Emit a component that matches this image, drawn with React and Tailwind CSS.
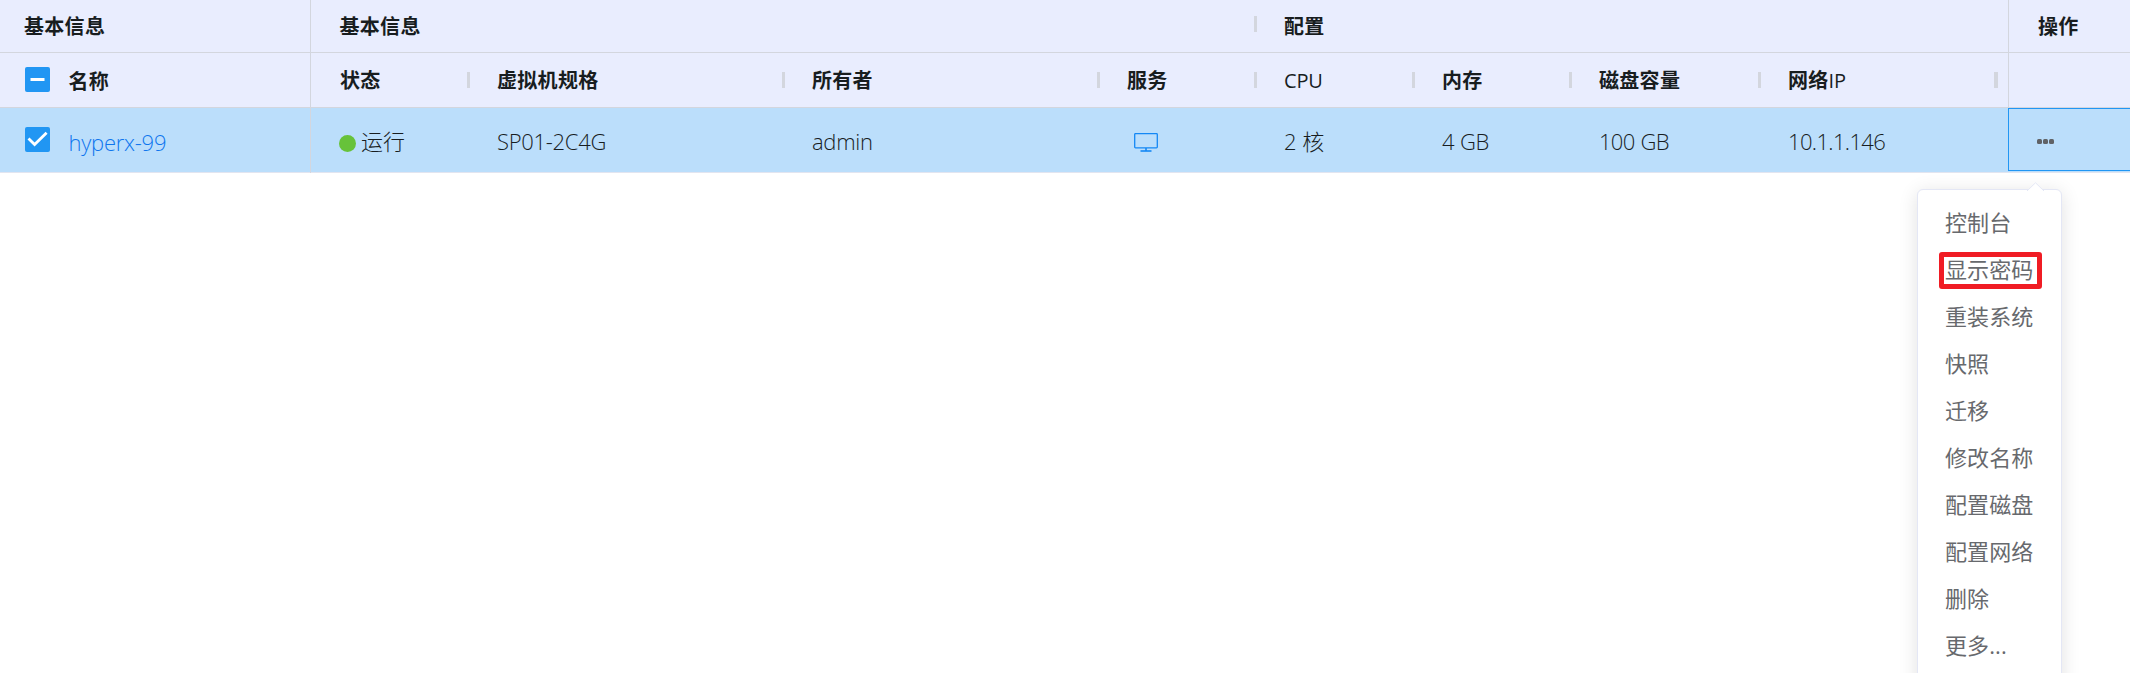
const Sep = ({ wide }) => (
  <span className={wide ? "absolute right-[10px] top-[19px] h-4 w-1 bg-[#d3d6de]" : "absolute -right-[2px] top-[19px] h-4 w-[3px] bg-[#d3d6de]"} />
);

const columns = [
  { title: "状态", width: "w-[157px]" },
  { title: "虚拟机规格", width: "w-[315px]" },
  { title: "所有者", width: "w-[315px]" },
  { title: "服务", width: "w-[157px]" },
  { title: "CPU", width: "w-[158px]", latin: true },
  { title: "内存", width: "w-[157px]" },
  { title: "磁盘容量", width: "w-[189px]" },
  { title: "网络", suffix: "IP", width: "w-[249px]", last: true },
];

const actions = ["控制台", "显示密码", "重装系统", "快照", "迁移", "修改名称", "配置磁盘", "配置网络", "删除", "更多..."];

const Monitor = () => (
  <svg className="ml-[7px] mt-[25px] h-5 w-6" viewBox="0 0 24 20" fill="none" stroke="#1488f5">
    <rect x="0.7" y="0.6" width="22.6" height="14.2" rx="0.8" strokeWidth="1.3" />
    <path d="M12 15v3" strokeWidth="1.6" />
    <path d="M6.5 18h11" strokeWidth="1.6" />
  </svg>
);

const Checkbox = ({ checked }) => (
  <svg className="h-[25px] w-[25px] shrink-0" viewBox="0 0 25 25" fill="none">
    <rect width="25" height="25" rx="2" fill="#2196f3" />
    {checked ? (
      <path d="M3.5 11.5L9.6 17.6L21.6 5.8" stroke="#fff" strokeWidth="2.8" />
    ) : (
      <path d="M5.5 12.5h14" stroke="#fff" strokeWidth="3" />
    )}
  </svg>
);

const Cell = ({ width, children }) => <div className={`${width} shrink-0 pl-[29px]`}>{children}</div>;

export default function App() {
  return (
    <div className="relative h-[673px] w-[2130px] overflow-hidden bg-white font-['Open_Sans','Noto_Sans_CJK_SC',sans-serif] whitespace-nowrap text-[#181d1f]">
      <div className="flex h-[173px]">
        <div className="w-[311px] shrink-0 border-r border-[#d3d6de]">
          <div className="h-[53px] border-b border-[#d3d6de] bg-[#e9edfe] pl-6 text-[20px] leading-[54px] font-bold tracking-[0.3px]">基本信息</div>
          <div className="flex h-[55px] border-b border-[#d3d6de] bg-[#e9edfe] pt-[14px] pl-[24.5px]">
            <Checkbox />
            <span className="ml-[19px] text-[20px] leading-[29px] font-bold tracking-[0.3px]">名称</span>
          </div>
          <div className="flex h-[65px] border-b border-[#e2e5f0] bg-[#bbdefb] pt-[19px] pl-[24.5px]">
            <Checkbox checked />
            <span className="ml-[19px] text-[22px] leading-[30px] font-light tracking-[-0.25px] text-[#0f76ee]">hyperx-99</span>
          </div>
        </div>

        <div className="w-[1697px] shrink-0">
          <div className="flex h-[53px] border-b border-[#d3d6de] bg-[#e9edfe] text-[20px] leading-[54px] font-bold tracking-[0.3px]">
            <div className="relative w-[944px] pl-[28.5px]">
              基本信息
              <span className="absolute -right-[2px] top-4 h-4 w-[3px] bg-[#d3d6de]" />
            </div>
            <div className="pl-[29px]">配置</div>
          </div>
          <div className="flex h-[55px] border-b border-[#d3d6de] bg-[#e9edfe] text-[20px] leading-[56px] font-bold tracking-[0.3px]">
            {columns.map((c) => (
              <div key={c.title} className={`${c.width} relative shrink-0 pl-[29px]`}>
                <span className={c.latin ? "font-medium tracking-[-0.2px]" : "font-bold"}>{c.title}</span>
                {c.suffix && <span className="font-medium tracking-[-0.2px]">{c.suffix}</span>}
                <Sep wide={c.last} />
              </div>
            ))}
          </div>
          <div className="flex h-[65px] border-b border-[#e2e5f0] bg-[#bbdefb] text-[22px] leading-[66px] font-light">
            <Cell width="w-[157px]">
              <div className="-ml-[1px] flex items-center">
                <span className="mt-[4px] mr-[5px] h-[17px] w-[17px] rounded-full bg-[#67c23a]" />
                运行
              </div>
            </Cell>
            <Cell width="w-[315px]"><span className="tracking-[-0.3px]">SP01-2C4G</span></Cell>
            <Cell width="w-[315px]"><span className="tracking-[-0.3px]">admin</span></Cell>
            <Cell width="w-[157px]"><Monitor /></Cell>
            <Cell width="w-[158px]">2 核</Cell>
            <Cell width="w-[157px]"><span className="tracking-[-0.6px] [word-spacing:1px]">4 GB</span></Cell>
            <Cell width="w-[189px]"><span className="tracking-[-0.7px] [word-spacing:1px]">100 GB</span></Cell>
            <Cell width="w-[249px]"><span className="tracking-[-0.65px]">10.1.1.146</span></Cell>
          </div>
        </div>

        <div className="w-[122px] shrink-0">
          <div className="h-[53px] border-b border-l border-[#d3d6de] bg-[#e9edfe] pl-[29px] text-[20px] leading-[54px] font-bold tracking-[0.3px]">操作</div>
          <div className="h-[55px] border-b border-l border-[#d3d6de] bg-[#e9edfe]" />
          <div className="h-[65px] border-b border-[#e2e5f0] bg-[#bbdefb]">
            <div className="flex h-[63px] items-center gap-[1px] border-y border-l border-[#2196f3] pt-[4px] pl-[27.5px]">
              <span className="h-[5px] w-[5.3px] rounded-[1.5px] bg-[#606266]" />
              <span className="h-[5px] w-[5.3px] rounded-[1.5px] bg-[#606266]" />
              <span className="h-[5px] w-[5.3px] rounded-[1.5px] bg-[#606266]" />
            </div>
          </div>
        </div>
      </div>

      <div className="absolute top-[189px] left-[1917px] h-[520px] w-[145px] rounded-[6px] border border-[#e4e7f5] bg-white pt-[9px] shadow-[0_3px_19px_rgba(0,0,0,0.12)]">
        <svg className="absolute -top-[8px] left-[108px] h-[10px] w-[20px]" viewBox="0 0 20 10">
          <path d="M1 9L9.5 0.8L18 9" fill="#fff" stroke="#e4e7f5" />
          <path d="M1 9.2h17v1H1z" fill="#fff" />
        </svg>
        {actions.map((a) => (
          <div key={a} className="h-[47px] pl-[27px] text-[22px] leading-[46px] tracking-[0.1px] text-[#67696d]">{a}</div>
        ))}
      </div>
      <div className="absolute top-[252px] left-[1939px] h-[37px] w-[103px] rounded-[3px] border-[5px] border-[#f01c24]" />
    </div>
  );
}
